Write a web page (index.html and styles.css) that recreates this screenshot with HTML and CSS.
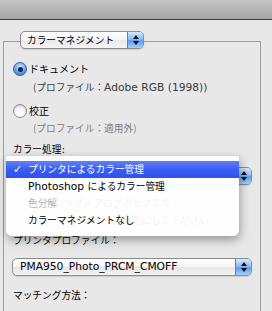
FILE: index.html
```html
<!DOCTYPE html>
<html lang="ja">
<head>
<meta charset="utf-8">
<link rel="stylesheet" href="styles.css">
</head>
<body>
<div class="titlebar"></div>
<div class="panel">
  <div class="group">
    <div class="header">
      <div class="popup popup-cm">
        <span class="popup-label">カラーマネジメント</span>
        <span class="stepper"><span class="up"></span><span class="down"></span></span>
      </div>
    </div>
    <div class="radio-row first">
      <span class="radio on"></span><span class="label">ドキュメント</span>
    </div>
    <div class="sub dark">(プロファイル：<span class="en">Adobe RGB (1998))</span></div>
    <div class="radio-row second">
      <span class="radio"></span><span class="label">校正</span>
    </div>
    <div class="sub grey">(プロファイル：適用外)</div>
    <div class="field-label l1">カラー処理<span class="en">:</span></div>
    <div class="popup popup-wide p1">
      <span class="popup-label">プリンタによるカラー管理</span>
      <span class="stepper"><span class="up"></span><span class="down"></span></span>
    </div>
    <div class="note">
      <div class="note-line n1">　　プリンタダイアログボックスで</div>
      <div class="note-line n2">　カラーマネジメントを無効にしてください</div>
    </div>
    <div class="field-label l2">プリンタプロファイル：</div>
    <div class="popup popup-wide p2">
      <span class="popup-label en">PMA950_Photo_PRCM_CMOFF</span>
      <span class="stepper"><span class="up"></span><span class="down"></span></span>
    </div>
    <div class="field-label l3">マッチング方法：</div>

    <div class="menu">
      <div class="item selected"><span class="check">✓</span>プリンタによるカラー管理</div>
      <div class="item"><span class="en">Photoshop </span>によるカラー管理</div>
      <div class="item disabled">色分解</div>
      <div class="item">カラーマネジメントなし</div>
    </div>
  </div>
</div>
</body>
</html>
```

FILE: styles.css
```css
* { box-sizing: border-box; }
html, body {
  margin: 0;
  padding: 0;
  background: #e8e8e8;
  overflow: hidden;
}
body {
  width: 272px;
  height: 311px;
  font-family: "Noto Sans CJK JP", "Noto Sans", sans-serif;
  font-size: 9.7px;
  color: #000;
}
.en {
  font-family: "DejaVu Sans", "Noto Sans CJK JP", sans-serif;
  font-size: 10.7px;
}
.titlebar {
  height: 20px;
  background: linear-gradient(#c3c3c3, #a6a6a6);
  border-bottom: 1px solid #3e3e3e;
}
.panel {
  padding: 21px 0 0 3px;
}
.group {
  position: relative;
  width: 258px;
  height: 270px;
  border: 1px solid #9c9c9c;
  border-bottom: none;
}
.header {
  margin-top: -11px;
  padding-left: 16px;
  display: flex;
}
.popup {
  position: relative;
  height: 18px;
  border: 1px solid #8c8c8c;
  border-radius: 5px;
  background: linear-gradient(#ffffff, #f4f4f4 50%, #e6e6e6 51%, #f3f3f3);
  display: flex;
  align-items: center;
  box-shadow: 0 1px 1px rgba(0,0,0,0.12);
}
.popup-cm {
  width: 124px;
  padding-left: 6px;
  background: linear-gradient(#ffffff, #f4f4f4 50%, #e9e9e9 51%, #f5f5f5);
}
.popup-label {
  flex: 1;
  line-height: 16px;
  white-space: nowrap;
}
.stepper {
  width: 16px;
  height: 16px;
  border-left: 1px solid #5c7fb8;
  border-radius: 0 4px 4px 0;
  background: linear-gradient(#d6e8fb, #8dbcf5 45%, #5a9bef 55%, #a8d0fa);
  display: flex;
  flex-direction: column;
  align-items: center;
  justify-content: center;
  gap: 2px;
}
.up, .down {
  width: 0;
  height: 0;
  border-left: 3px solid transparent;
  border-right: 3px solid transparent;
}
.up { border-bottom: 4px solid #111; }
.down { border-top: 4px solid #111; }

.radio-row {
  height: 16px;
  display: flex;
  align-items: center;
  padding-left: 9px;
}
.radio-row.first { margin-top: 12px; }
.radio-row.second { margin-top: 8px; }
.radio {
  width: 14px;
  height: 14px;
  border-radius: 50%;
  border: 1px solid #8a8a8a;
  background: linear-gradient(#f2f2f2, #ffffff);
  box-shadow: inset 0 1px 2px rgba(0,0,0,0.2);
  margin-right: 2px;
  display: flex;
  align-items: center;
  justify-content: center;
}
.radio.on {
  border-color: #3d5f98;
  background: radial-gradient(circle at 50% 30%, #cfe4fb, #5f9bea 60%, #3a72c8);
  box-shadow: none;
}
.radio.on::after {
  content: "";
  width: 5px;
  height: 5px;
  border-radius: 50%;
  background: #15244a;
}
.label { line-height: 16px; font-size: 10px; }
.sub {
  height: 16px;
  line-height: 16px;
  padding-left: 29px;
  white-space: nowrap;
}
.sub.dark { margin-top: 2px; color: #3c3c3c; }
.sub.grey { margin-top: 1px; color: #7c7c7c; }

.field-label {
  height: 16px;
  line-height: 16px;
  padding-left: 9px;
}
.l1 { margin-top: 5px; }
.l2 { margin-top: 3px; }
.l3 { margin-top: 11px; }

.popup-wide {
  margin-left: 8px;
  width: 240px;
  padding-left: 7px;
}
.p1 { margin-top: 10px; }
.p2 { margin-top: 10px; }

.note {
  margin-top: 10px;
  padding-left: 12px;
  color: #555;
}
.note-line {
  height: 17px;
  line-height: 17px;
  white-space: nowrap;
}

.menu {
  position: absolute;
  left: 2px;
  top: 113px;
  width: 233px;
  height: 81px;
  padding-top: 5px;
  background: rgba(255,255,255,0.93);
  border-top: 1px solid #d8d8d8;
  border-radius: 3px 3px 6px 6px;
  box-shadow: 1px 4px 10px rgba(0,0,0,0.35);
}
.item {
  height: 17px;
  line-height: 17px;
  padding-left: 22px;
  position: relative;
  white-space: nowrap;
  color: #000;
}
.item.selected {
  color: #fff;
  background: linear-gradient(#6082f7, #3b5df1 50%, #2f51ee);
}
.check {
  position: absolute;
  left: 7px;
  top: 0;
  font-weight: bold;
  font-family: "DejaVu Sans", sans-serif;
  font-size: 11px;
}
.item.disabled { color: #b4b4b4; }
```
